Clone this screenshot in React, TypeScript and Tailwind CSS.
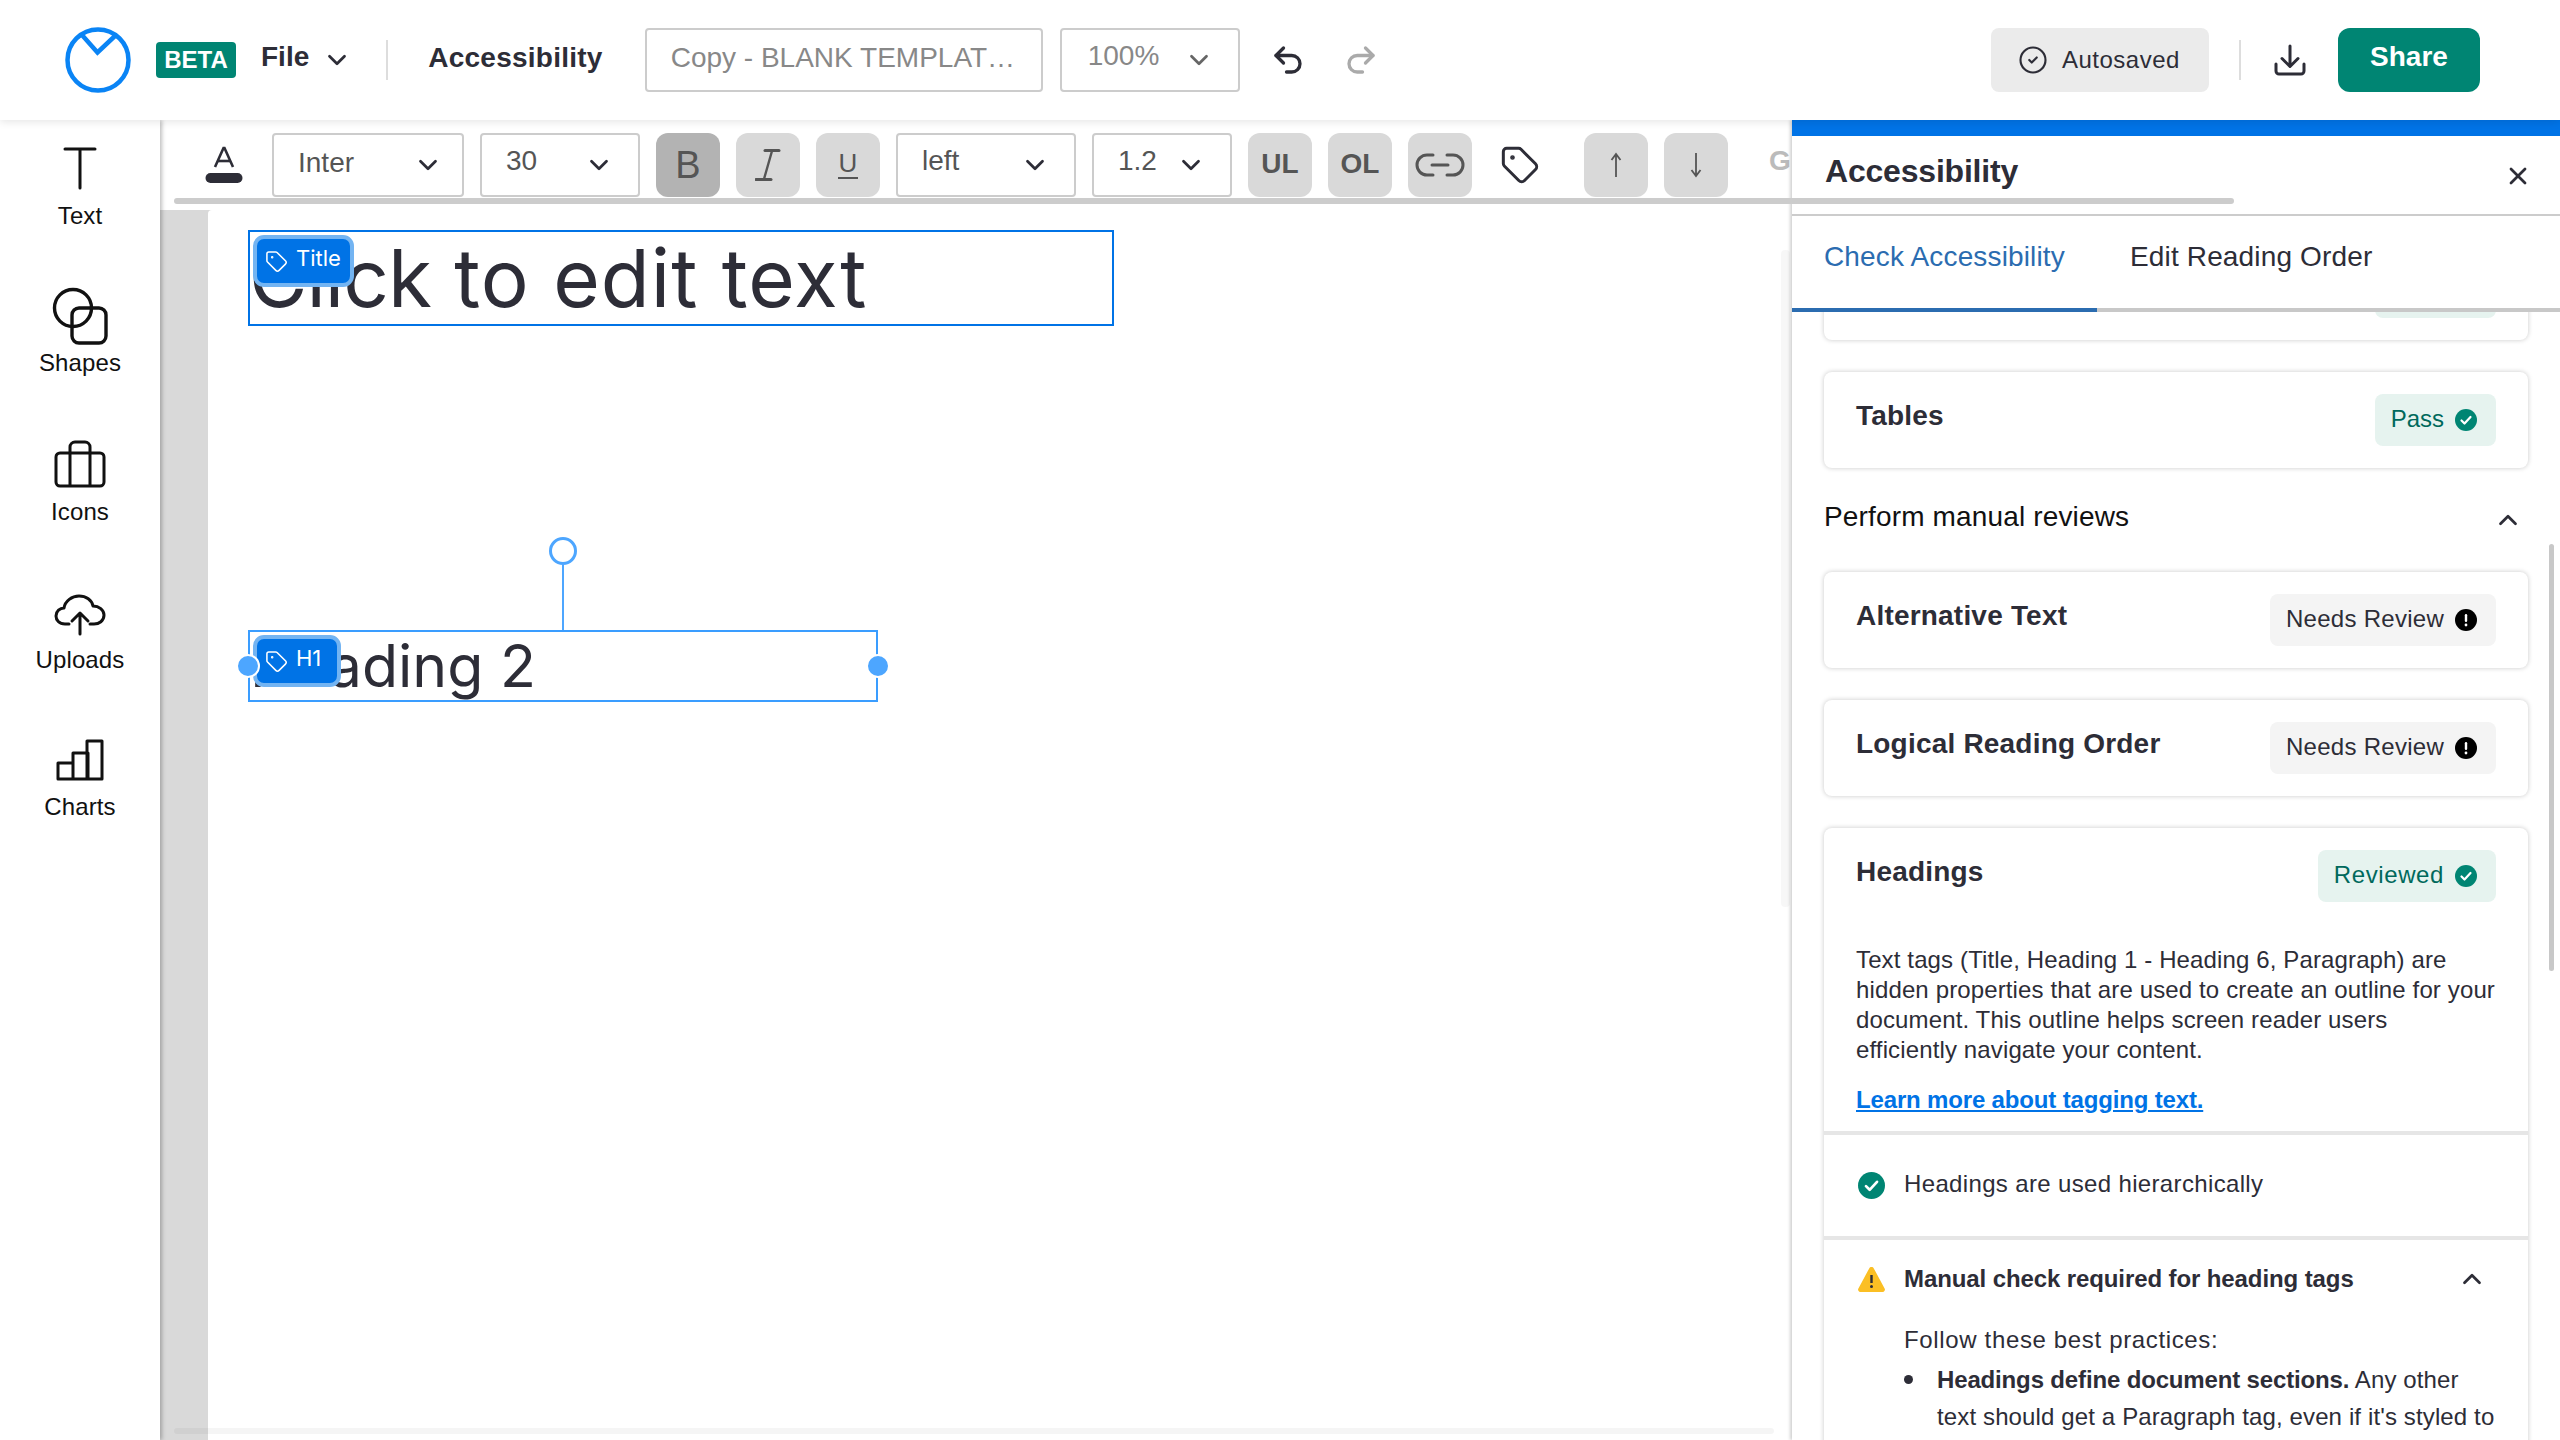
import React from "react";
import { ChevronDown, ChevronUp, Undo2, Redo2, CircleCheck, Tag, X } from "lucide-react";

const Down = ({ c = "#2d2d37" }: { c?: string }) => <ChevronDown size={30} strokeWidth={2.2} color={c} className="shrink-0" />;

function CheckDot({ size = 22 }: { size?: number }) {
  return (
    <svg width={size} height={size} viewBox="0 0 22 22" className="shrink-0">
      <circle cx="11" cy="11" r="11" fill="#008573" />
      <path d="M6.5 11.5l3 3 6-6.5" fill="none" stroke="#fff" strokeWidth="2.2" strokeLinecap="round" strokeLinejoin="round" />
    </svg>
  );
}

function AlertDot() {
  return (
    <svg width={22} height={22} viewBox="0 0 22 22" className="shrink-0">
      <circle cx="11" cy="11" r="11" fill="#000" />
      <rect x="9.8" y="5" width="2.4" height="8" rx="1.2" fill="#fff" />
      <circle cx="11" cy="16" r="1.4" fill="#fff" />
    </svg>
  );
}

function SideItem({ icon, label, h }: { icon: React.ReactNode; label: string; h: string }) {
  return (
    <div className={`flex flex-col items-center ${h}`}>
      {icon}
      <span className="text-[24px] leading-[28px] text-[#111] tracking-[0.1px]">{label}</span>
    </div>
  );
}

function Btn({ children, bg = "bg-[#d9d9d9]" }: { children?: React.ReactNode; bg?: string }) {
  return <div className={`w-16 h-16 shrink-0 rounded-xl flex items-center justify-center text-[#555] ${bg}`}>{children}</div>;
}

function Select({ w, label, pr = "pr-[24px]", mt = "-mt-[8px]" }: { w: string; label: string; pr?: string; mt?: string }) {
  return (
    <div className={`${w} h-16 shrink-0 border-2 border-[#ccc] rounded-[4px] flex items-center justify-between pl-[24px] ${pr}`}>
      <span className={`text-[28px] leading-[28px] text-[#555] ${mt}`}>{label}</span>
      <Down />
    </div>
  );
}

function Badge({ label, tone, track = "" }: { label: string; tone: "ok" | "review"; track?: string }) {
  return (
    <div className={`h-[52px] flex items-center gap-[11px] pl-[16px] pr-[19px] rounded-lg ${tone === "ok" ? "bg-[#e6f3ef]" : "bg-[#f4f4f4]"}`}>
      <span className={`text-[24px] -mt-[3px] ${track} ${tone === "ok" ? "text-[#00695c]" : "text-[#2d2d37]"}`}>{label}</span>
      {tone === "ok" ? <CheckDot /> : <AlertDot />}
    </div>
  );
}

function Card({ title, label, tone, track }: { title: string; label: string; tone: "ok" | "review"; track?: string }) {
  return (
    <div className="h-[96px] rounded-lg bg-white shadow-[0_0_5px_rgba(0,0,0,0.22)] pl-[32px] pr-[32px] pt-[22px] flex justify-between items-start">
      <span className="text-[28px] leading-[42px] mt-[1px] font-bold text-[#2d2d37] tracking-[0.2px]">{title}</span>
      <Badge label={label} tone={tone} track={track} />
    </div>
  );
}

function CanvasTag({ label, w }: { label: string; w: string }) {
  return (
    <div className={`absolute left-[3px] top-[3px] ${w} h-[52px] rounded-[11px] bg-[#0073e6] border-[4px] border-[#73b4f2] flex items-center gap-[8px] pl-[8px] font-['Inter',sans-serif] text-white text-[22px] z-10`}>
      <Tag size={23} strokeWidth={1.6} color="#fff" className="shrink-0" />
      <span className="-mt-[5px]">{label}</span>
    </div>
  );
}

export default function App() {
  return (
    <div className="relative w-[2560px] h-[1440px] overflow-hidden bg-white flex flex-col font-['Liberation_Sans',sans-serif] text-[#2d2d37]">
      {/* Header */}
      <header className="relative z-30 h-[120px] shrink-0 bg-white shadow-[0_2px_8px_rgba(0,0,0,0.1)] flex items-center pl-[65px] pr-[80px]">
        <svg width="66" height="66" viewBox="0 0 66 66" className="shrink-0">
          <circle cx="33" cy="33" r="30.5" fill="none" stroke="#0a84f5" strokeWidth="4.5" />
          <path d="M17 8l15.5 17.5L51 8" fill="none" stroke="#0a84f5" strokeWidth="4.5" />
        </svg>
        <div className="ml-[25px] w-[80px] h-[36px] rounded-[4px] bg-[#008573] text-white font-bold text-[24px] flex items-center justify-center">BETA</div>
        <span className="ml-[25px] text-[28px] font-bold -mt-[6px]">File</span>
        <div className="ml-[13px]"><Down /></div>
        <div className="ml-[34px] w-[2px] h-[40px] bg-[#ddd]" />
        <span className="ml-[40px] text-[28px] font-bold tracking-[0.25px] -mt-[5px]">Accessibility</span>
        <div className="ml-[42px] w-[398px] h-[64px] border-2 border-[#ccc] rounded-[4px] flex items-center pl-[24px] text-[28px] text-[#888] whitespace-nowrap overflow-hidden">
          <span className="-mt-[5px]">Copy - BLANK TEMPLAT…</span>
        </div>
        <div className="ml-[17px] w-[180px] h-[64px] border-2 border-[#ccc] rounded-[4px] flex items-center justify-between pl-[26px] pr-[24px] text-[28px] text-[#888]">
          <span className="-mt-[8px]">100%</span>
          <Down c="#666" />
        </div>
        <div className="ml-[30px]"><Undo2 size={36} strokeWidth={2.2} color="#2d2d37" /></div>
        <div className="ml-[37px]"><Redo2 size={36} strokeWidth={2.2} color="#aaa" /></div>
        <div className="ml-auto w-[218px] h-[64px] rounded-lg bg-[#ebebeb] flex items-center pl-[27px] gap-[14px]">
          <CircleCheck size={30} strokeWidth={1.7} color="#2d2d37" className="shrink-0" />
          <span className="text-[24px] tracking-[0.5px]">Autosaved</span>
        </div>
        <div className="ml-[30px] w-[2px] h-[40px] bg-[#ddd]" />
        <svg width="32" height="32" viewBox="0 0 32 32" className="ml-[33px] shrink-0" fill="none" stroke="#2d2d37" strokeWidth="3" strokeLinecap="round" strokeLinejoin="round">
          <path d="M16 2v20M8 14.5l8 8 8-8" />
          <path d="M2 20v7a3 3 0 003 3h22a3 3 0 003-3v-7" />
        </svg>
        <div className="ml-[32px] w-[142px] h-[64px] rounded-xl bg-[#008573] text-white text-[28px] font-bold flex items-center justify-center">
          <span className="-mt-[6px]">Share</span>
        </div>
      </header>

      <div className="flex flex-1 min-h-0">
        {/* Left sidebar */}
        <aside className="relative z-20 w-[160px] shrink-0 bg-white shadow-[2px_0_4px_rgba(0,0,0,0.25)] flex flex-col items-center pt-[26px]">
          <SideItem
            h="h-[141px]"
            label="Text"
            icon={
              <svg width="36" height="44" viewBox="0 0 36 44" className="mb-[12px]" fill="none" stroke="#111" strokeWidth="3" strokeLinecap="round">
                <path d="M3 3h30M18 3v39" />
              </svg>
            }
          />
          <SideItem
            h="h-[153px]"
            label="Shapes"
            icon={
              <svg width="56" height="58" viewBox="0 0 56 58" className="mb-[4px]" fill="none" stroke="#111" strokeWidth="3.4">
                <circle cx="21" cy="21" r="18.5" />
                <rect x="20" y="21" width="34" height="35" rx="7" />
              </svg>
            }
          />
          <SideItem
            h="h-[148px]"
            label="Icons"
            icon={
              <svg width="52" height="48" viewBox="0 0 52 48" className="mb-[10px]" fill="none" stroke="#111" strokeWidth="3" strokeLinejoin="round">
                <rect x="2" y="13" width="48" height="33" rx="4" />
                <path d="M16 46V7a5 5 0 015-5h10a5 5 0 015 5v39" />
              </svg>
            }
          />
          <SideItem
            h="h-[151px]"
            label="Uploads"
            icon={
              <svg width="52" height="42" viewBox="0 0 52 42" className="mt-[6px] mb-[10px]" fill="none" stroke="#111" strokeWidth="3" strokeLinecap="round" strokeLinejoin="round">
                <path d="M15 30H11C5 30 2 26 2 22C2 17 6 14 10 14C11 7 18 2 25 2C32 2 38 6 39 12C45 12 50 16 50 21C50 27 45 30 40 30H36" />
                <path d="M26 40V20M18 27l8-8 8 8" />
              </svg>
            }
          />
          <SideItem
            h="h-[100px]"
            label="Charts"
            icon={
              <svg width="48" height="42" viewBox="0 0 48 42" className="mb-[12px]" fill="none" stroke="#111" strokeWidth="3" strokeLinejoin="round">
                <path d="M2 24h15v16H2zM17 14h15v26H17zM31 2h15v38H31z" />
              </svg>
            }
          />
        </aside>

        {/* Main column */}
        <main className="relative w-[1632px] shrink-0 flex flex-col overflow-visible">
          {/* Format toolbar */}
          <div className="h-[90px] shrink-0 bg-white pt-[13px] pl-[32px] flex items-start gap-4 overflow-hidden">
            <div className="w-16 h-16 shrink-0 flex items-center justify-center">
              <svg width="38" height="38" viewBox="0 0 38 38">
                <path d="M10 21L18.5 2h1L28 21" fill="none" stroke="#2d2d37" strokeWidth="2.6" />
                <path d="M13 15h12" stroke="#2d2d37" strokeWidth="2.6" />
                <rect x="0.5" y="27" width="37" height="10" rx="5" fill="#2d2d37" />
              </svg>
            </div>
            <Select w="w-[192px]" label="Inter" pr="pr-[19px]" mt="-mt-[5px]" />
            <Select w="w-[160px]" label="30" />
            <Btn bg="bg-[#b3b3b3]"><span className="text-[38px] leading-none">B</span></Btn>
            <Btn>
              <svg width="26" height="34" viewBox="0 0 26 34" fill="none" stroke="#555" strokeLinecap="round">
                <path d="M10 2.500h14" strokeWidth="3" />
                <path d="M17 3L9 31" strokeWidth="2.400" />
                <path d="M1 31.500h15" strokeWidth="3" />
              </svg>
            </Btn>
            <Btn>
              <span className="flex flex-col items-center">
                <span className="text-[26px] leading-[24px]">U</span>
                <span className="w-[20px] h-[2px] bg-[#555] mt-[2px]" />
              </span>
            </Btn>
            <Select w="w-[180px]" label="left" />
            <Select w="w-[140px]" label="1.2" />
            <Btn><span className="text-[28px] font-bold -mt-[3px]">UL</span></Btn>
            <Btn><span className="text-[28px] font-bold -mt-[3px]">OL</span></Btn>
            <Btn>
              <svg width="50" height="24" viewBox="0 0 50 24" fill="none" stroke="#555" strokeWidth="3" strokeLinecap="round">
                <path d="M18 2H12a10 10 0 000 20h6" />
                <path d="M32 2h6a10 10 0 010 20h-6" />
                <path d="M17 12h16" />
              </svg>
            </Btn>
            <div className="w-16 h-16 shrink-0 flex items-center justify-center">
              <Tag size={40} strokeWidth={1.8} color="#2d2d37" />
            </div>
            <div className="ml-4 shrink-0">
              <Btn>
                <svg width="12" height="26" viewBox="0 0 12 26" fill="none" stroke="#555" strokeWidth="1.8"><path d="M6 25V2M1.500 8L6 2l4.500 6" /></svg>
              </Btn>
            </div>
            <Btn>
              <svg width="12" height="26" viewBox="0 0 12 26" fill="none" stroke="#555" strokeWidth="1.8"><path d="M6 1v23M1.500 18L6 24l4.500-6" /></svg>
            </Btn>
            <span className="ml-[25px] text-[28px] font-bold text-[#bbb] leading-[64px] -mt-[4px]">G</span>
          </div>

          {/* Canvas */}
          <div className="relative flex-1 flex min-h-0 bg-[#d9d9d9]">
            <div className="w-[48px] shrink-0" />
            <div className="relative flex-1 bg-white rounded-tl-[4px]">
              {/* Title element */}
              <div className="absolute left-[40px] top-[20px] w-[866px] h-[96px] border-2 border-[#0073e6] font-['Inter',sans-serif]">
                <CanvasTag label="Title" w="w-[101px]" />
                <div className="text-[80px] leading-[92px] tracking-[1px] -ml-[1px] whitespace-nowrap">
                  <span className="tracking-[-1px]">Click</span> to edit text
                </div>
              </div>
              {/* Heading element */}
              <div className="absolute left-[40px] top-[420px] w-[630px] h-[72px] border-2 border-[#3a9dff] font-['Inter',sans-serif]">
                <CanvasTag label="H1" w="w-[88px]" />
                <div className="text-[59px] leading-[68px] whitespace-nowrap">Heading 2</div>
                <div className="absolute -left-[14px] top-[22px] w-[24px] h-[24px] rounded-full bg-[#4da6ff] border-2 border-white z-20" />
                <div className="absolute -right-[14px] top-[22px] w-[24px] h-[24px] rounded-full bg-[#4da6ff] border-2 border-white z-20" />
                <div className="absolute left-[312px] -top-[67px] w-[2px] h-[65px] bg-[#4da6ff]" />
                <div className="absolute left-[299px] -top-[95px] w-[28px] h-[28px] rounded-full bg-white border-[3px] border-[#4da6ff]" />
              </div>
              {/* Canvas vertical scrollbar */}
              <div className="absolute left-[1573px] top-[40px] w-[9px] h-[657px] rounded bg-black/[0.03]" />
            </div>
            {/* Canvas bottom scrollbar */}
            <div className="absolute left-[14px] bottom-[6px] w-[1600px] h-[6px] rounded bg-black/[0.04]" />
          </div>
        </main>

        {/* Right panel */}
        <section className="relative z-10 w-[768px] shrink-0 bg-white border-t-[16px] border-[#0073e6] shadow-[-2px_0_3px_rgba(0,0,0,0.18)] flex flex-col overflow-hidden">
          <div className="h-[80px] shrink-0 border-b-2 border-[#ccc] flex items-start justify-between pl-[33px] pr-[32px] bg-white">
            <h2 className="text-[32px] leading-[42px] mt-[14px] font-bold tracking-[-0.2px]">Accessibility</h2>
            <X size={28} strokeWidth={2.4} color="#2d2d37" className="mt-[26px] mr-[-4px]" />
          </div>
          <div className="relative z-10 h-[96px] shrink-0 bg-white flex items-start border-b-4 border-[#c8c8c8]">
            <div className="w-[305px] h-[96px] shrink-0 border-b-4 border-[#2b6cb0] pl-[32px] pt-[23px] text-[28px] leading-[36px] tracking-[0.15px] text-[#2b6cb0]">Check Accessibility</div>
            <div className="pl-[33px] pt-[23px] text-[28px] leading-[36px] tracking-[0.15px]">Edit Reading Order</div>
          </div>
          <div className="flex-1 min-h-0 overflow-hidden pl-[32px] pr-[32px]">
            <div className="-mt-[68px] flex flex-col gap-[32px]">
              <Card title="Color Contrast" label="Pass" tone="ok" />
              <Card title="Tables" label="Pass" tone="ok" />
              <div className="h-[40px] flex items-center justify-between">
                <span className="text-[28px] tracking-[0.15px] -mt-[7px] text-[#111]">Perform manual reviews</span>
                <ChevronUp size={30} strokeWidth={2.2} color="#2d2d37" className="mr-[5px]" />
              </div>
              <Card title="Alternative Text" label="Needs Review" tone="review" track="tracking-[0.27px]" />
              <Card title="Logical Reading Order" label="Needs Review" tone="review" track="tracking-[0.27px]" />
              <div className="rounded-lg bg-white shadow-[0_0_5px_rgba(0,0,0,0.22)]">
                <div className="px-[32px] pt-[22px] h-[307px] border-b-4 border-[#e6e6e6]">
                  <div className="flex justify-between items-start">
                    <span className="text-[28px] leading-[42px] mt-[1px] font-bold tracking-[0.2px]">Headings</span>
                    <Badge label="Reviewed" tone="ok" track="tracking-[0.6px]" />
                  </div>
                  <p className="mt-[43px] text-[24px] leading-[30px] tracking-[0.13px] w-[650px]">
                    Text tags (Title, Heading 1 - Heading 6, Paragraph) are hidden properties that are used to create an outline for your document. This outline helps screen reader users<br />efficiently navigate your content.
                  </p>
                  <a className="block mt-[20px] text-[24px] leading-[30px] font-bold text-[#0073e6] underline tracking-[-0.16px]">Learn more about tagging text.</a>
                </div>
                <div className="h-[105px] border-b-4 border-[#e6e6e6] pl-[34px] pt-[37px] flex items-start gap-[19px]">
                  <CheckDot size={27} />
                  <span className="text-[24px] leading-[30px] tracking-[0.35px] -mt-[3px]">Headings are used hierarchically</span>
                </div>
                <div className="pl-[34px] pr-[32px] pt-[24px]">
                  <div className="flex items-start gap-[19px]">
                    <svg width="27" height="25" viewBox="0 0 27 25" className="mt-[3px] shrink-0">
                      <path d="M13.500 0c1 0 1.800.500 2.300 1.400l10.800 20a2.400 2.400 0 01-2.100 3.600H2.500a2.400 2.400 0 01-2.100-3.600l10.800-20C11.700.500 12.500 0 13.500 0z" fill="#fbbf24" />
                      <rect x="12.300" y="8" width="2.400" height="8" fill="#2d2d37" />
                      <circle cx="13.500" cy="19.500" r="1.500" fill="#2d2d37" />
                    </svg>
                    <span className="flex-1 text-[24px] leading-[30px] font-bold tracking-[-0.1px]">Manual check required for heading tags</span>
                    <ChevronUp size={30} strokeWidth={2.2} color="#2d2d37" className="mr-[9px]" />
                  </div>
                  <div className="pl-[46px] text-[24px]">
                    <p className="mt-[31px] leading-[30px] tracking-[0.65px]">Follow these best practices:</p>
                    <div className="mt-[6px] flex gap-[24px] leading-[37px] tracking-[0.13px]">
                      <span className="mt-[14px] w-[9px] h-[9px] rounded-full bg-[#2d2d37] shrink-0" />
                      <p className="w-[560px]"><b className="tracking-[-0.15px]">Headings define document sections.</b> Any other text should get a Paragraph tag, even if it's styled to look different from surrounding text. Subtitles</p>
                    </div>
                  </div>
                </div>
              </div>
            </div>
          </div>
          {/* Panel scrollbar */}
          <div className="absolute left-[757px] top-[408px] w-[5px] h-[427px] rounded bg-[#c8c8c8]" />
        </section>
      </div>

      {/* Toolbar horizontal scrollbar, lying over the panel */}
      <div className="absolute left-[174px] top-[198px] w-[2060px] h-[6px] rounded bg-[#ccc] z-20" />
    </div>
  );
}
